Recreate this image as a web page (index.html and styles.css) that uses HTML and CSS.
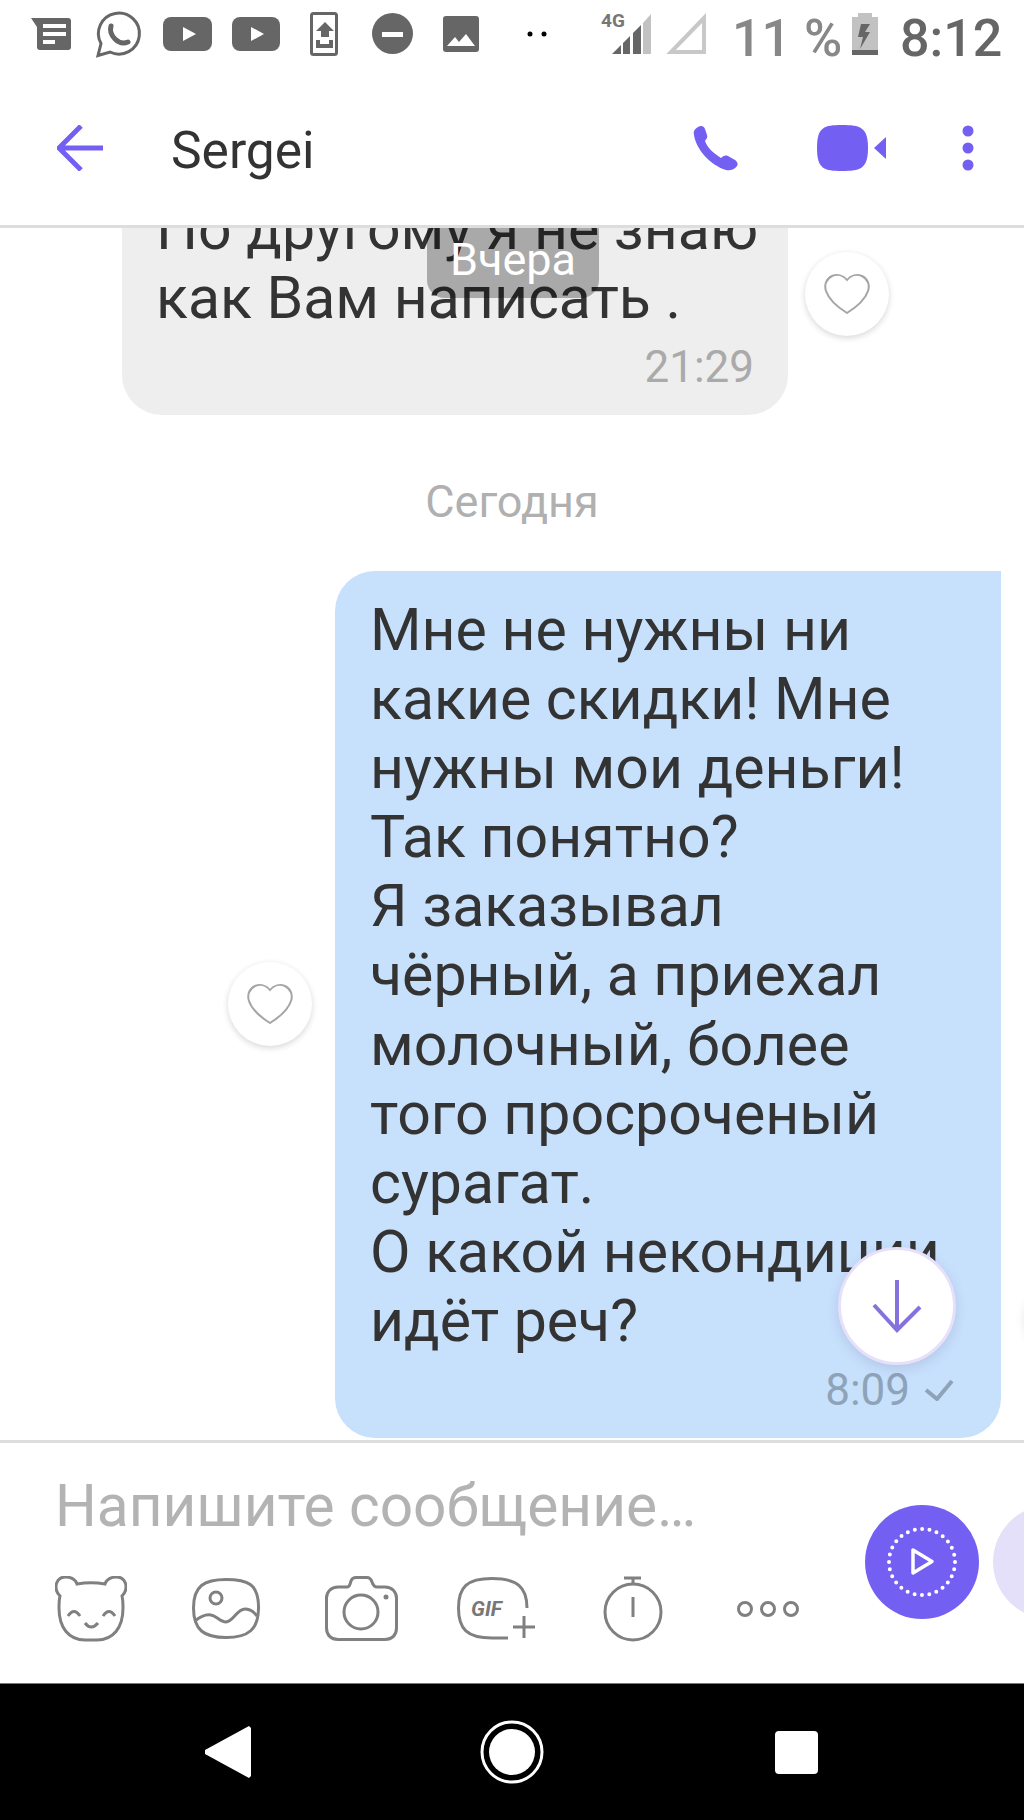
FILE: index.html
```html
<!DOCTYPE html>
<html lang="ru">
<head>
  <meta charset="UTF-8" />
  <meta name="viewport" content="width=device-width, initial-scale=1.0"/>
  <title>Sergei</title>
  <link rel="stylesheet" href="styles.css">
</head>
<body>

<div class="status-bar">
  <svg class="status-strip" width="710" height="70" viewBox="0 0 710 70">
    <path class="ic" d="M31 18H68a3 3 0 0 1 3 3V47a3 3 0 0 1-3 3H40a3 3 0 0 1-3-3V27Z"/>
    <path class="ic-w" d="M43 24h23v4H43zM43 32h23v4H43zM43 40h12v4H43z"/>
    <path class="ic-line" d="M98 55.500L101 43.500A20.500 20.500 0 1 1 110 52Z"/>
    <path class="ic-phone" d="M111 26Q109 33 115 39Q121 45 128 42"/>
    <rect class="ic" x="163" y="17" width="49" height="34" rx="8"/>
    <path class="ic-w" d="M183 27V41L196 34Z"/>
    <rect class="ic" x="232" y="17" width="48" height="34" rx="8"/>
    <path class="ic-w" d="M251 27V41L264 34Z"/>
    <rect class="ic-line" x="311.500" y="13.500" width="25" height="41" rx="2"/>
    <path class="ic" d="M325 22L334 31H329V37H321V31H316Z"/>
    <path class="ic" d="M316 40H320V44H329V40H333V48H316Z"/>
    <circle class="ic" cx="392.500" cy="33.500" r="20.500"/>
    <rect class="ic-w" x="382" y="32" width="21" height="5"/>
    <rect class="ic" x="443" y="16" width="36" height="36" rx="3"/>
    <path class="ic-w" d="M447 46L455 37L459 42L466 34L475 46Z"/>
    <circle cx="530" cy="34" r="2.500"/>
    <circle cx="544" cy="34" r="2.500"/>
    <text class="net" x="601" y="27">4G</text>
    <path class="ic" d="M612 54H621V45ZM623 54H630V36L623 43ZM633 54H641V25L633 33Z"/>
    <path class="ic-light" d="M643 54H651V14L643 23Z"/>
    <path class="ic-empty" d="M671 52H704V18Z"/>
  </svg>
  <span class="battery-text">11 %</span>
  <svg class="battery" width="26" height="42" viewBox="0 0 26 42">
    <path class="ic-light" d="M6 0H20V4H26V37H0V4H6Z"/>
    <rect class="ic" x="0" y="37" width="26" height="5"/>
    <path class="ic" d="M18 11H9L6 24H11L8 36L18 19H13Z"/>
  </svg>
  <span class="clock">8:12</span>
</div>

<header class="topbar">
  <svg class="back" width="46" height="46" viewBox="0 0 46 46">
    <path d="M46 23H3M24 1L2 23L24 45"/>
  </svg>
  <div class="contact">Sergei</div>
  <svg class="icon-call" width="45" height="46" viewBox="0 0 45 46">
    <path d="M5 2C8 0 11 1 12 4L14 10C15 13 13 14 12 16C14 22 20 28 28 33C30 31 32 30 35 31L42 35C45 37 45 40 44 41C41 45 37 46 33 45C17 40 3 24 1 10C0 6 2 4 5 2Z"/>
  </svg>
  <svg class="icon-video" width="70" height="46" viewBox="0 0 70 46">
    <path d="M25 0C43 0 51 2 51 23C51 44 43 46 25 46C7 46 0 44 0 23C0 2 7 0 25 0Z"/>
    <path d="M57 23L69 12V34Z"/>
  </svg>
  <svg class="icon-more" width="12" height="46" viewBox="0 0 12 46">
    <circle cx="6" cy="6" r="5.500"/>
    <circle cx="6" cy="23" r="5.500"/>
    <circle cx="6" cy="40" r="5.500"/>
  </svg>
</header>

<main class="chat">
  <div class="date-pill">Вчера</div>

  <div class="row row-in">
    <div class="bubble bubble-in">
      <div class="msg-text">По другому я не знаю<br>как Вам написать .</div>
      <div class="msg-meta"><span class="msg-time">21:29</span></div>
    </div>
    <button class="like">
      <svg width="46" height="40" viewBox="0 0 46 40"><path d="M23 6C19 1 13 0 8 2C2 5 0 11 2 17C5 26 15 34 23 39C31 34 41 26 44 17C46 11 44 5 38 2C33 0 27 1 23 6Z"/></svg>
    </button>
  </div>

  <div class="date-label">Сегодня</div>

  <div class="row row-out">
    <button class="like">
      <svg width="46" height="40" viewBox="0 0 46 40"><path d="M23 6C19 1 13 0 8 2C2 5 0 11 2 17C5 26 15 34 23 39C31 34 41 26 44 17C46 11 44 5 38 2C33 0 27 1 23 6Z"/></svg>
    </button>
    <div class="bubble bubble-out">
      <div class="msg-text">Мне не нужны ни<br>какие скидки! Мне<br>нужны мои деньги!<br>Так понятно?<br>Я заказывал<br>чёрный, а приехал<br>молочный, более<br>того просроченый<br>сурагат.<br>О какой некондиции<br>идёт реч?</div>
      <div class="msg-meta">
        <span class="msg-time">8:09</span>
        <svg class="check" width="30" height="22" viewBox="0 0 30 22"><path d="M2 11L13 20L28 2"/></svg>
      </div>
    </div>
  </div>

  <button class="scroll-down">
    <svg width="50" height="54" viewBox="0 0 50 54"><path d="M25 1V51M2 26L25 51L48 28"/></svg>
  </button>
  <div class="edge-shadow"></div>
</main>

<section class="composer">
  <div class="composer-main">
    <div class="placeholder">Напишите сообщение…</div>
    <div class="tools">
      <svg width="72" height="66" viewBox="0 0 72 66">
        <path d="M22 8C20 2 14 1 10 1C4 1 1 6 1 11C1 15 3 18 5 20C4 24 4 28 4 32C4 52 14 64 30 64H42C58 64 68 52 68 32C68 28 68 24 67 20C69 18 71 15 71 11C71 6 68 1 62 1C58 1 52 2 50 8C41 6.500 31 6.500 22 8Z"/>
        <path d="M13 40Q19 31 25 40M48 40Q54 31 60 40M30 47Q36 55 43 47"/>
      </svg>
      <svg width="68" height="62" viewBox="0 0 68 62">
        <path d="M34 1.500C56 1.500 66 6 66.500 28C67 52 56 59.500 34 59.500C12 59.500 1.500 52 1.500 30C1.500 8 12 1.500 34 1.500Z"/>
        <circle cx="24" cy="20" r="6"/>
        <path d="M3 43C9 38 14 36 19 37C25 38 28 44 34 44C41 44 45 31 53 31C58 31 62 34 65 38"/>
      </svg>
      <svg width="73" height="66" viewBox="0 0 73 66">
        <path d="M13 11H22C25 11 25 8 26 5C27 2 29 1.500 31 1.500H42C45 1.500 46 3 47 6C48 9 49 11 52 11H60C67 11 71.500 16 71.500 22V52C71.500 59 67 63.500 60 63.500H13C6 63.500 1.500 59 1.500 52V22C1.500 16 6 11 13 11Z"/>
        <circle cx="36" cy="36" r="17"/>
        <circle class="solid" cx="61" cy="21" r="2.500"/>
      </svg>
      <svg width="80" height="64" viewBox="0 0 80 64">
        <path d="M70 31C70 10 60 1.500 35 1.500C10 1.500 1.500 10 1.500 31C1.500 52 10 61 35 61H51"/>
        <path d="M56 50H78M67 39V61"/>
        <text class="gif" x="14" y="39">GIF</text>
      </svg>
      <svg width="60" height="66" viewBox="0 0 60 66">
        <circle cx="30" cy="36" r="28"/>
        <path d="M21 2H38M30 2V8M30 21V41"/>
      </svg>
      <svg width="62" height="16" viewBox="0 0 62 16">
        <circle cx="8" cy="8" r="6.500"/>
        <circle cx="31" cy="8" r="6.500"/>
        <circle cx="54" cy="8" r="6.500"/>
      </svg>
    </div>
  </div>
  <button class="send">
    <svg width="80" height="80" viewBox="0 0 80 80">
      <circle class="dotted" cx="40" cy="40" r="33"/>
      <path class="play" d="M31 28V51L50 39.500Z"/>
    </svg>
  </button>
  <div class="send-alt"></div>
</section>

<nav class="android-nav">
  <svg width="48" height="54" viewBox="0 0 48 54"><path d="M45 1L47 3V51L45 53L1 29V25Z"/></svg>
  <svg width="64" height="64" viewBox="0 0 64 64">
    <circle class="home-ring" cx="32" cy="32" r="30"/>
    <circle cx="32" cy="32" r="23"/>
  </svg>
  <div class="nav-square"></div>
</nav>

</body>
</html>
```

FILE: styles.css
```css
* {
  box-sizing: border-box;
}
html, body {
  margin: 0;
  height: 1820px;
  overflow: hidden;
}
body {
  font-family: Roboto, "Liberation Sans", sans-serif;
  background-color: #fff;
  color: #333;
  display: flex;
  flex-direction: column;
}
button {
  border: none;
  padding: 0;
  cursor: pointer;
}

/* status bar */
.status-bar {
  height: 70px;
  flex-shrink: 0;
  display: flex;
  align-items: flex-start;
  background-color: #fff;
}
.status-strip {
  flex-shrink: 0;
}
.ic {
  fill: #666;
}
.ic-w {
  fill: #fff;
}
.ic-light {
  fill: #c2c2c2;
}
.ic-line {
  fill: none;
  stroke: #666;
  stroke-width: 3;
}
.ic-phone {
  fill: none;
  stroke: #666;
  stroke-width: 5;
  stroke-linecap: round;
}
.ic-empty {
  fill: none;
  stroke: #c8c8c8;
  stroke-width: 4;
}
.net {
  font-size: 19px;
  font-weight: 700;
  fill: #777;
}
.battery-text {
  margin-left: 22px;
  width: 120px;
  font-size: 52px;
  line-height: 77px;
  font-weight: 500;
  color: #888;
  white-space: nowrap;
}
.battery {
  margin-top: 13px;
  flex-shrink: 0;
}
.clock {
  margin-left: 22px;
  font-size: 52px;
  line-height: 77px;
  font-weight: 500;
  color: #666;
}

/* top bar */
.topbar {
  height: 158px;
  flex-shrink: 0;
  display: flex;
  align-items: center;
  padding: 0 50px 0 57px;
  border-bottom: 3px solid #ddd;
}
.topbar svg {
  flex-shrink: 0;
}
.back path {
  fill: none;
  stroke: #7360f2;
  stroke-width: 5;
}
.contact {
  margin-left: 68px;
  margin-right: auto;
  padding-top: 6px;
  font-size: 51.500px;
  color: #333;
}
.icon-call path, .icon-video path, .icon-more circle {
  fill: #7360f2;
}
.icon-video {
  margin-left: 79px;
}
.icon-more {
  margin-left: 75px;
}

/* messages */
.chat {
  flex: 1;
  min-height: 0;
  position: relative;
  overflow: hidden;
  display: flex;
  flex-direction: column;
  justify-content: flex-end;
  padding-bottom: 2px;
}
.date-pill {
  position: absolute;
  top: 0;
  left: 427px;
  width: 172px;
  height: 70px;
  padding-top: 9px;
  text-align: center;
  font-size: 45px;
  line-height: 46px;
  color: #fff;
  background-color: rgba(0, 0, 0, 0.29);
  border-radius: 0 0 18px 18px;
}
.row {
  display: flex;
  align-items: center;
  flex-shrink: 0;
}
.row-in {
  padding-left: 122px;
  gap: 17px;
}
.row-in .like {
  margin-top: 4px;
}
.row-out {
  justify-content: flex-end;
  padding-right: 23px;
  gap: 23px;
}
.bubble {
  width: 666px;
  padding: 24px 34px 23px 34px;
  flex-shrink: 0;
}
.bubble-in {
  background-color: #eee;
  border-radius: 0 0 40px 40px;
}
.bubble-out {
  padding-left: 35px;
  background-color: #c7e0fc;
  border-radius: 40px 0 40px 40px;
}
.msg-text {
  font-size: 59px;
  line-height: 69.100px;
  white-space: nowrap;
  color: #333;
}
.msg-meta {
  display: flex;
  justify-content: flex-end;
  align-items: center;
  gap: 14px;
  margin-top: 10px;
  font-size: 44px;
  line-height: 50px;
}
.bubble-in .msg-time {
  color: #aaa;
}
.bubble-out .msg-time {
  color: #8ea3b8;
}
.check {
  margin-right: 13px;
}
.check path {
  fill: none;
  stroke: #8ea3b8;
  stroke-width: 4;
}
.like {
  width: 84px;
  height: 84px;
  flex-shrink: 0;
  display: flex;
  align-items: center;
  justify-content: center;
  border-radius: 50%;
  background-color: #fff;
  box-shadow: 0 2px 6px rgba(0, 0, 0, 0.16);
}
.like path {
  fill: none;
  stroke: #a5a5a5;
  stroke-width: 2;
}
.date-label {
  flex-shrink: 0;
  margin: 61px 0 43px;
  text-align: center;
  font-size: 45px;
  line-height: 52px;
  color: #b0b0b0;
}
.scroll-down {
  position: absolute;
  left: 838px;
  top: 1019px;
  width: 118px;
  height: 118px;
  display: flex;
  align-items: center;
  justify-content: center;
  border-radius: 50%;
  background-color: #fff;
  border: 3px solid #e6e0fa;
  box-shadow: 0 4px 12px rgba(90, 90, 140, 0.18);
}
.scroll-down path {
  fill: none;
  stroke: #8572dd;
  stroke-width: 4;
}
.edge-shadow {
  position: absolute;
  left: 1024px;
  top: 1060px;
  width: 64px;
  height: 64px;
  border-radius: 50%;
  box-shadow: 0 0 10px rgba(0, 0, 0, 0.1);
}

/* message input */
.composer {
  height: 243px;
  flex-shrink: 0;
  display: flex;
  align-items: center;
  overflow: hidden;
  border-top: 3px solid #ddd;
}
.composer-main {
  width: 865px;
  flex-shrink: 0;
  padding: 0 0 13px 23px;
}
.placeholder {
  padding-left: 32px;
  font-size: 58.600px;
  line-height: 70px;
  color: #b3b3b3;
  white-space: nowrap;
}
.tools {
  display: grid;
  grid-template-columns: repeat(6, 135.500px);
  align-items: center;
  justify-items: center;
  margin-top: 35px;
}
.tools svg * {
  fill: none;
  stroke: #808080;
  stroke-width: 3;
}
.tools .solid {
  fill: #808080;
  stroke: none;
}
.tools .gif {
  fill: #777;
  stroke: none;
  font-size: 21px;
  font-weight: 700;
  font-style: italic;
}
.send {
  width: 114px;
  height: 114px;
  flex-shrink: 0;
  margin-bottom: 3px;
  display: flex;
  align-items: center;
  justify-content: center;
  border-radius: 50%;
  background-color: #7360f2;
}
.dotted {
  fill: none;
  stroke: #fff;
  stroke-width: 4;
  stroke-linecap: round;
  stroke-dasharray: 0 7.400;
}
.play {
  fill: none;
  stroke: #fff;
  stroke-width: 3.500;
  stroke-linejoin: round;
}
.send-alt {
  width: 114px;
  height: 114px;
  flex-shrink: 0;
  margin: 0 0 3px 14px;
  border-radius: 50%;
  background-color: #e5e0fa;
}

/* android buttons */
.android-nav {
  height: 137px;
  flex-shrink: 0;
  display: flex;
  align-items: center;
  background-color: #000;
  border-top: 1px solid #777;
  padding-left: 204px;
}
.android-nav svg path, .android-nav svg circle {
  fill: #fff;
}
.android-nav svg:nth-child(2) {
  margin-left: 228px;
}
.android-nav .home-ring {
  fill: none;
  stroke: #fff;
  stroke-width: 3;
}
.nav-square {
  width: 43px;
  height: 43px;
  margin-left: 231px;
  border-radius: 4px;
  background-color: #fff;
}
```
